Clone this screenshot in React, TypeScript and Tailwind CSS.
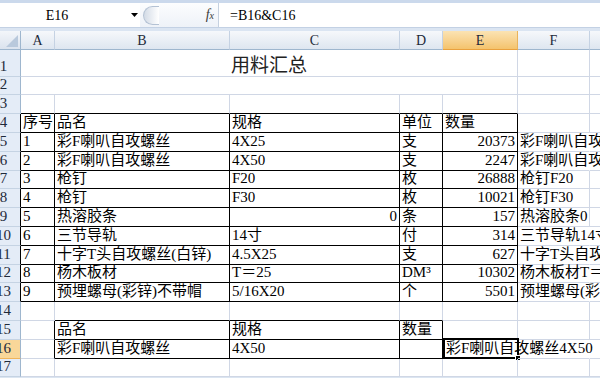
import { Fragment } from 'react'

const GRID = 'grid grid-cols-[21px_34px_175px_170px_43px_75px_72px_120px]'
const FONT = "font-['Liberation_Serif','Noto_Sans_CJK_SC',serif]"
const COLS = ['A', 'B', 'C', 'D', 'E', 'F', 'G']

const H: Record<number, string> = {
  1: 'h-[27px]', 2: 'h-[18px]', 3: 'h-[19px]', 4: 'h-[19px]', 5: 'h-[19px]', 6: 'h-[19px]',
  7: 'h-[18px]', 8: 'h-[19px]', 9: 'h-[19px]', 10: 'h-[19px]', 11: 'h-[19px]', 12: 'h-[18px]',
  13: 'h-[19px]', 14: 'h-[19px]', 15: 'h-[19px]', 16: 'h-[19px]', 17: 'h-[18px]',
}

const DATA: Record<number, string[]> = {
  4: ['序号', '品名', '规格', '单位', '数量', ''],
  5: ['1', '彩F喇叭自攻螺丝', '4X25', '支', '20373', '彩F喇叭自攻螺丝4X25'],
  6: ['2', '彩F喇叭自攻螺丝', '4X50', '支', '2247', '彩F喇叭自攻螺丝4X50'],
  7: ['3', '枪钉', 'F20', '枚', '26888', '枪钉F20'],
  8: ['4', '枪钉', 'F30', '枚', '10021', '枪钉F30'],
  9: ['5', '热溶胶条', '0', '条', '157', '热溶胶条0'],
  10: ['6', '三节导轨', '14寸', '付', '314', '三节导轨14寸'],
  11: ['7', '十字T头自攻螺丝(白锌)', '4.5X25', '支', '627', '十字T头自攻螺丝(白锌)4.5X25'],
  12: ['8', '杨木板材', 'T＝25', 'DM³', '10302', '杨木板材T＝25'],
  13: ['9', '预埋螺母(彩锌)不带帽', '5/16X20', '个', '5501', '预埋螺母(彩锌)不带帽5/16X20'],
  15: ['', '品名', '规格', '数量', '', ''],
  16: ['', '彩F喇叭自攻螺丝', '4X50', '', '彩F喇叭自攻螺丝4X50', ''],
}

// cells whose text runs over the next cell, so the gridline is hidden
const OVERFLOW = ['5-6', '6-6', '10-6', '11-6', '12-6', '13-6', '16-5', '16-6']

function bordered(r: number, c: number) {
  if (r >= 4 && r <= 13 && c >= 1 && c <= 5) return true
  if (r >= 15 && r <= 16 && c >= 2 && c <= 4) return true
  return false
}

function Cell({ r, c }: { r: number; c: number }) {
  const text = DATA[r]?.[c - 1] ?? ''
  const right = (r >= 5 && r <= 13 && c === 5) || (r === 9 && c === 3)
  const rb = OVERFLOW.includes(`${r}-${c}`)
    ? 'border-r-transparent'
    : bordered(r, c) || bordered(r, c + 1)
      ? 'border-r-black'
      : 'border-r-[#d0d7e5]'
  const bb = bordered(r, c) || bordered(r + 1, c) ? 'border-b-black' : 'border-b-[#d0d7e5]'
  const selected = r === 16 && c === 5

  return (
    <div
      className={`relative flex items-end border-r border-b ${H[r]} ${rb} ${bb} ${
        right ? 'justify-end pr-[2px]' : selected ? 'pl-[3px]' : 'pl-[2px]'
      }`}
    >
      <span className="whitespace-nowrap text-[15px] leading-none pb-[2px] text-black">{text}</span>
      {selected && (
        <>
          <div className="absolute left-0 -top-[2px] w-[76px] h-[21px] border-2 border-black" />
          <div className="absolute left-[72px] top-[15px] w-[6px] h-[6px] bg-black border border-white" />
        </>
      )}
    </div>
  )
}

function RowHead({ r }: { r: number }) {
  const sel = r === 16
  return (
    <div
      className={`flex items-end overflow-hidden border-r border-b ${H[r]} ${
        sel ? 'bg-[#f9d799] border-b-[#f0b45a]' : 'bg-[#e4ecf7] border-b-[#c5d3e3]'
      } ${r >= 4 && r <= 13 ? 'border-r-black' : 'border-r-[#9eb6ce]'}`}
    >
      <span className="w-[33px] shrink-0 -ml-[13px] text-center text-[15px] leading-none pb-[2px] text-[#1e2a3a]">
        {r}
      </span>
    </div>
  )
}

function FormulaBar() {
  return (
    <div>
      <div className="h-[3px] bg-[#cbd9ec]" />
      <div className="h-[25px] flex bg-white border-b border-[#c3d1e4]">
        <div className="w-[128px] flex items-center justify-center pr-[14px] text-[14px] text-black">E16</div>
        <div className="w-[12px] flex items-center justify-center">
          <svg width="7" height="4" viewBox="0 0 7 4">
            <polygon points="0,0 7,0 3.5,4" fill="#000" />
          </svg>
        </div>
        <div className="w-[78px] flex items-center pl-[3px] bg-linear-to-b from-[#fcfdfe] to-[#eef2f8]">
          <div className="w-[16px] h-[19px] rounded-l-full border-l border-y border-[#b4c2d4] bg-linear-to-r from-[#d3dbe6] to-white" />
          <div className="flex-1" />
          <span className="italic text-[14px] text-[#3a3a3a] pr-[4px] leading-none">
            f<span className="text-[10px]">x</span>
          </span>
        </div>
        <div className="w-px bg-[#c5d1e0]" />
        <div className="flex-1 flex items-center pl-[11px] text-[14px] text-black">=B16&amp;C16</div>
      </div>
      <div className="h-[3px] bg-[#dbe5f2]" />
    </div>
  )
}

export default function App() {
  const rows = Array.from({ length: 17 }, (_, i) => i + 1)

  return (
    <div className={`w-[600px] h-[378px] overflow-hidden bg-[#dbe5f1] ${FONT}`}>
      <FormulaBar />
      <div className={`${GRID} bg-white`}>
        {/* column headers */}
        <div className="relative h-[19px] border-r border-b border-[#9eb6ce] bg-linear-to-b from-[#f3f6fa] to-[#dbe3ee]">
          <svg className="absolute right-[2px] bottom-[2px]" width="12" height="12" viewBox="0 0 12 12">
            <polygon points="12,0 12,12 0,12" fill="#b9c9dc" />
          </svg>
        </div>
        {COLS.map((l) => (
          <div
            key={l}
            className={`h-[19px] flex items-center justify-center border-r border-b text-[14px] text-[#1e2a3a] ${
              l === 'E'
                ? 'bg-linear-to-b from-[#fbe3b3] to-[#f4c36c] border-r-[#e9b35c] border-b-[#e9a13e]'
                : 'bg-linear-to-b from-[#f6f8fb] to-[#dee6f0] border-r-[#c5d2e3] border-b-[#9eb6ce]'
            }`}
          >
            {l}
          </div>
        ))}

        {rows.map((r) => (
          <Fragment key={r}>
            <RowHead r={r} />
            {r <= 2 ? (
              <>
                <div className={`col-span-5 flex items-end justify-center border-r border-b border-[#d0d7e5] ${H[r]}`}>
                  {r === 1 && (
                    <span className="text-[19px] leading-none pb-[1px] text-[#222]">用料汇总</span>
                  )}
                </div>
                <Cell r={r} c={6} />
                <Cell r={r} c={7} />
              </>
            ) : (
              [1, 2, 3, 4, 5, 6, 7].map((c) => <Cell key={c} r={r} c={c} />)
            )}
          </Fragment>
        ))}
      </div>
    </div>
  )
}
